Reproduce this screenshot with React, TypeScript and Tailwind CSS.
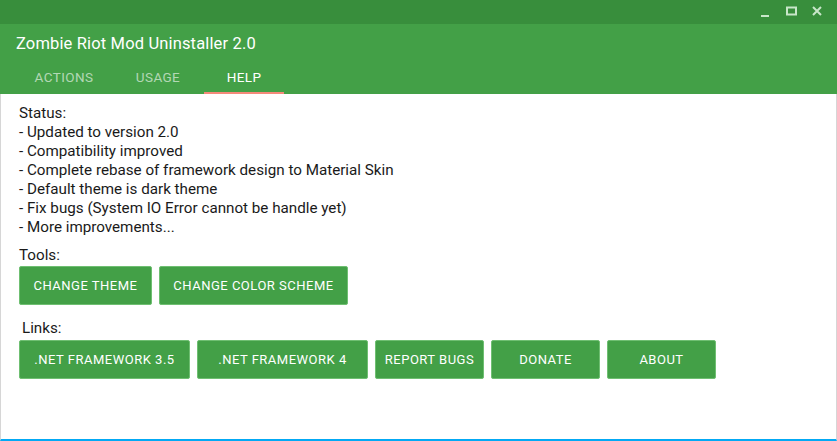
import React from 'react';

const statusLines = [
  'Status:',
  '- Updated to version 2.0',
  '- Compatibility improved',
  '- Complete rebase of framework design to Material Skin',
  '- Default theme is dark theme',
  '- Fix bugs (System IO Error cannot be handle yet)',
  '- More improvements...',
];

const tabs = [
  { label: 'ACTIONS', w: 'w-[96px]', active: false },
  { label: 'USAGE', w: 'w-[92px]', active: false },
  { label: 'HELP', w: 'w-[80px]', active: true },
];

function GreenButton({ label, w }: { label: string; w: string }) {
  return (
    <button
      className={`${w} h-[39px] flex items-center justify-center rounded-[2px] border border-[#6fbf72] bg-[#43a047] text-[13px] font-normal tracking-[0.5px] text-white`}
    >
      {label}
    </button>
  );
}

export default function App() {
  return (
    <div className="w-[837px] h-[441px] flex flex-col bg-white font-['Roboto',_'Liberation_Sans',_sans-serif] overflow-hidden select-none">
      {/* Window titlebar */}
      <div className="h-[24px] shrink-0 bg-[#388e3c] flex items-center justify-end pr-[12px] gap-[12px]">
        <svg width="14" height="14" viewBox="0 0 14 14" className="mt-[2px]">
          <rect x="2" y="9" width="8" height="2" fill="#c8e6c9" />
        </svg>
        <svg width="14" height="14" viewBox="0 0 14 14">
          <rect x="2" y="2.5" width="9" height="7" fill="none" stroke="#c8e6c9" strokeWidth="2" />
        </svg>
        <svg width="14" height="14" viewBox="0 0 14 14">
          <path d="M2 2 L10 10 M10 2 L2 10" stroke="#c8e6c9" strokeWidth="2" />
        </svg>
      </div>

      {/* Header + tabs */}
      <div className="h-[70px] shrink-0 bg-[#43a047] flex flex-col">
        <div className="h-[40px] flex items-center pl-[16px] text-[16.5px] font-normal tracking-[0.15px] text-white">
          Zombie Riot Mod Uninstaller 2.0
        </div>
        <div className="flex pl-[16px] h-[30px]">
          {tabs.map(t => (
            <div
              key={t.label}
              className={`${t.w} flex flex-col items-center justify-between text-[13.5px] font-normal tracking-[0.4px] ${
                t.active ? 'text-white' : 'text-white/60'
              }`}
            >
              <span className="pt-[3px]">{t.label}</span>
              <span className={`h-[2px] w-full ${t.active ? 'bg-[#f48a7a]' : ''}`} />
            </div>
          ))}
        </div>
      </div>

      {/* Content */}
      <div className="flex-1 flex flex-col border-l border-r border-[#d6d6d6] border-b-2 border-b-[#03a9f4] pl-[18px] pt-[10px] text-[15.2px] text-[#1a1a1a]">
        <div className="flex flex-col leading-[19px]">
          {statusLines.map(l => (
            <div key={l}>{l}</div>
          ))}
        </div>

        <div className="mt-[9px] leading-[19px]">Tools:</div>
        <div className="flex gap-[7px] mt-[1px]">
          <GreenButton label="CHANGE THEME" w="w-[133px]" />
          <GreenButton label="CHANGE COLOR SCHEME" w="w-[189px]" />
        </div>

        <div className="mt-[14px] pl-[3px] leading-[19px]">Links:</div>
        <div className="flex gap-[7px] mt-[2px]">
          <GreenButton label=".NET FRAMEWORK 3.5" w="w-[171px]" />
          <GreenButton label=".NET FRAMEWORK 4" w="w-[171px]" />
          <GreenButton label="REPORT BUGS" w="w-[109px]" />
          <GreenButton label="DONATE" w="w-[109px]" />
          <GreenButton label="ABOUT" w="w-[109px]" />
        </div>
      </div>
    </div>
  );
}
